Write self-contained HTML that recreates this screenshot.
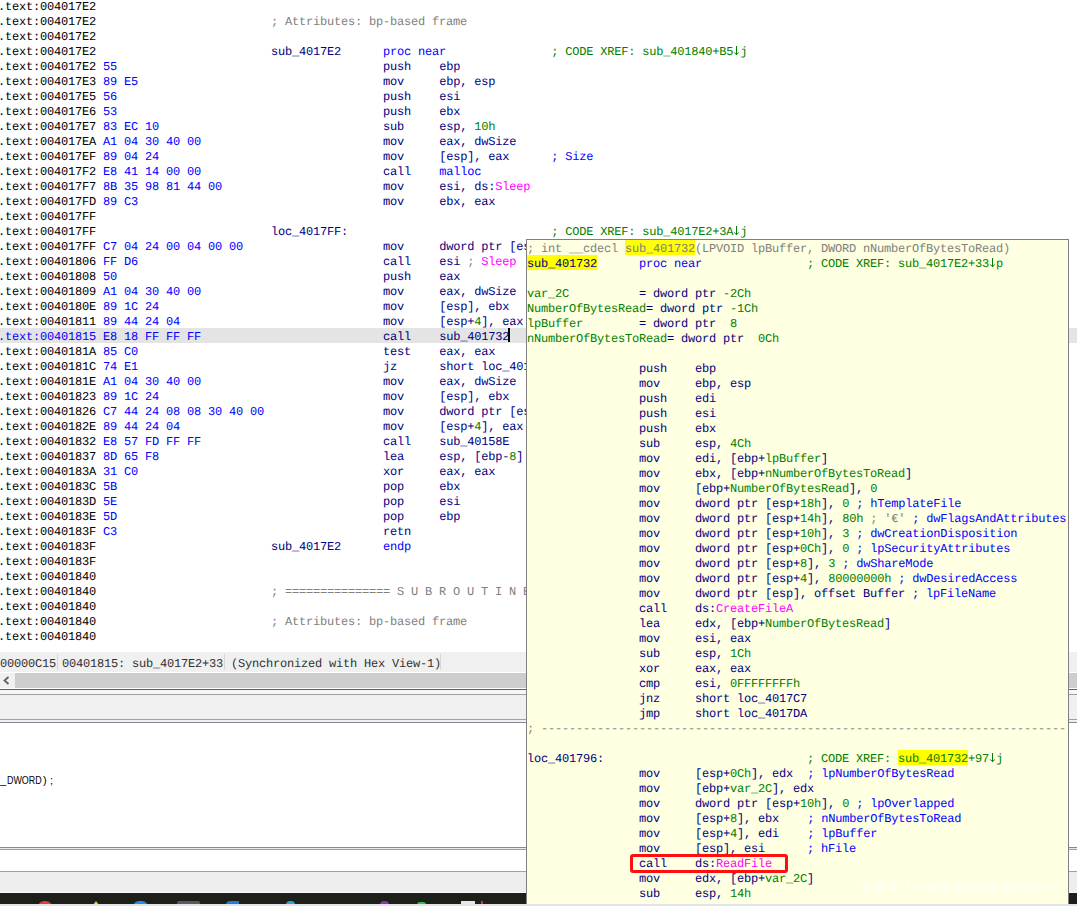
<!DOCTYPE html>
<html><head><meta charset="utf-8"><style>
html,body{margin:0;padding:0;}
body{width:1077px;height:906px;overflow:hidden;position:relative;background:#fff;font-family:"Liberation Mono",monospace;}
.abs{position:absolute;}
.ln{height:15px;white-space:pre;}
.code{font-size:12px;letter-spacing:-0.2px;line-height:15px;text-rendering:geometricPrecision;}
.code .ln{position:relative;top:2px;}
.a{color:#000}
.ab{color:#0000ff}
.b{color:#0000ff}
.i{color:#000080}
.d{color:#0000ff}
.n{color:#008000}
.g{color:#808080}
.c{color:#0000ff}
.x{color:#008000}
.m{color:#ff00ff}
.l{color:#000080}
.v{color:#008000}
.gh{color:#808080}
.lh{color:#000080}
.xh{color:#008000}
#main{left:-2px;top:-2px;}
#hlrow{left:0;top:328px;width:1077px;height:15px;background:#e4e4e4;}
#cursor{left:508px;top:328px;width:2px;height:14px;background:#000;}
#status{left:0;top:652px;width:1077px;height:20px;background:#f0f0f0;font-size:12px;letter-spacing:-0.2px;text-rendering:geometricPrecision;line-height:20px;color:#303030;}
#status span{position:absolute;top:2px;white-space:pre;}
.sep{position:absolute;top:2px;width:1px;height:16px;background:#d7d7d7;}
#popup{left:526px;top:239px;width:541px;height:665px;border:1px solid #808080;border-bottom:none;background:#ffffe1;overflow:hidden;}
#pcode{left:0;top:0;}
#redbox{left:630px;top:854px;width:152px;height:13px;border:3px solid #ff1010;border-radius:3px;}
.yh{position:absolute;height:15px;background:#ffff00;}
.arr{display:inline-block;vertical-align:top;width:7px;height:15px;}

</style></head><body>
<div id="hlrow" class="abs"></div>
<div id="main" class="abs code">
<div class="ln"><span class="a">.text:004017E2</span></div>
<div class="ln"><span class="a">.text:004017E2</span>                         <span class="g">; Attributes: bp-based frame</span></div>
<div class="ln"><span class="a">.text:004017E2</span></div>
<div class="ln"><span class="a">.text:004017E2</span>                         <span class="l">sub_4017E2</span>      <span class="d">proc near</span>               <span class="x">; CODE XREF: sub_401840+B5<svg class="arr" width="7" height="15"><path d="M3.5 1V9.8M1.3 7.4L3.5 9.8L5.7 7.4" fill="none" stroke="currentColor" stroke-width="1"/></svg>j</span></div>
<div class="ln"><span class="a">.text:004017E2</span> <span class="b">55</span>                                      <span class="i">push</span>    <span class="i">ebp</span></div>
<div class="ln"><span class="a">.text:004017E3</span> <span class="b">89 E5</span>                                   <span class="i">mov</span>     <span class="i">ebp, esp</span></div>
<div class="ln"><span class="a">.text:004017E5</span> <span class="b">56</span>                                      <span class="i">push</span>    <span class="i">esi</span></div>
<div class="ln"><span class="a">.text:004017E6</span> <span class="b">53</span>                                      <span class="i">push</span>    <span class="i">ebx</span></div>
<div class="ln"><span class="a">.text:004017E7</span> <span class="b">83 EC 10</span>                                <span class="i">sub</span>     <span class="i">esp, </span><span class="n">10h</span></div>
<div class="ln"><span class="a">.text:004017EA</span> <span class="b">A1 04 30 40 00</span>                          <span class="i">mov</span>     <span class="i">eax, dwSize</span></div>
<div class="ln"><span class="a">.text:004017EF</span> <span class="b">89 04 24</span>                                <span class="i">mov</span>     <span class="i">[esp], eax</span>      <span class="c">; Size</span></div>
<div class="ln"><span class="a">.text:004017F2</span> <span class="b">E8 41 14 00 00</span>                          <span class="i">call</span>    <span class="c">malloc</span></div>
<div class="ln"><span class="a">.text:004017F7</span> <span class="b">8B 35 98 81 44 00</span>                       <span class="i">mov</span>     <span class="i">esi, ds:</span><span class="m">Sleep</span></div>
<div class="ln"><span class="a">.text:004017FD</span> <span class="b">89 C3</span>                                   <span class="i">mov</span>     <span class="i">ebx, eax</span></div>
<div class="ln"><span class="a">.text:004017FF</span></div>
<div class="ln"><span class="a">.text:004017FF</span>                         <span class="l">loc_4017FF:</span>                             <span class="x">; CODE XREF: sub_4017E2+3A<svg class="arr" width="7" height="15"><path d="M3.5 1V9.8M1.3 7.4L3.5 9.8L5.7 7.4" fill="none" stroke="currentColor" stroke-width="1"/></svg>j</span></div>
<div class="ln"><span class="a">.text:004017FF</span> <span class="b">C7 04 24 00 04 00 00</span>                    <span class="i">mov</span>     <span class="i">dword ptr [esp], </span><span class="n">400h</span></div>
<div class="ln"><span class="a">.text:00401806</span> <span class="b">FF D6</span>                                   <span class="i">call</span>    <span class="i">esi </span><span class="g">; </span><span class="m">Sleep</span></div>
<div class="ln"><span class="a">.text:00401808</span> <span class="b">50</span>                                      <span class="i">push</span>    <span class="i">eax</span></div>
<div class="ln"><span class="a">.text:00401809</span> <span class="b">A1 04 30 40 00</span>                          <span class="i">mov</span>     <span class="i">eax, dwSize</span></div>
<div class="ln"><span class="a">.text:0040180E</span> <span class="b">89 1C 24</span>                                <span class="i">mov</span>     <span class="i">[esp], ebx</span></div>
<div class="ln"><span class="a">.text:00401811</span> <span class="b">89 44 24 04</span>                             <span class="i">mov</span>     <span class="i">[esp+</span><span class="n">4</span><span class="i">], eax</span></div>
<div class="ln"><span class="ab">.text:00401815</span> <span class="b">E8 18 FF FF FF</span>                          <span class="i">call</span>    <span class="i">sub_401732</span></div>
<div class="ln"><span class="a">.text:0040181A</span> <span class="b">85 C0</span>                                   <span class="i">test</span>    <span class="i">eax, eax</span></div>
<div class="ln"><span class="a">.text:0040181C</span> <span class="b">74 E1</span>                                   <span class="i">jz</span>      <span class="i">short loc_4017FF</span></div>
<div class="ln"><span class="a">.text:0040181E</span> <span class="b">A1 04 30 40 00</span>                          <span class="i">mov</span>     <span class="i">eax, dwSize</span></div>
<div class="ln"><span class="a">.text:00401823</span> <span class="b">89 1C 24</span>                                <span class="i">mov</span>     <span class="i">[esp], ebx</span></div>
<div class="ln"><span class="a">.text:00401826</span> <span class="b">C7 44 24 08 08 30 40 00</span>                 <span class="i">mov</span>     <span class="i">dword ptr [esp+</span><span class="n">8</span><span class="i">], offset aD</span></div>
<div class="ln"><span class="a">.text:0040182E</span> <span class="b">89 44 24 04</span>                             <span class="i">mov</span>     <span class="i">[esp+</span><span class="n">4</span><span class="i">], eax</span></div>
<div class="ln"><span class="a">.text:00401832</span> <span class="b">E8 57 FD FF FF</span>                          <span class="i">call</span>    <span class="i">sub_40158E</span></div>
<div class="ln"><span class="a">.text:00401837</span> <span class="b">8D 65 F8</span>                                <span class="i">lea</span>     <span class="i">esp, [ebp-</span><span class="n">8</span><span class="i">]</span></div>
<div class="ln"><span class="a">.text:0040183A</span> <span class="b">31 C0</span>                                   <span class="i">xor</span>     <span class="i">eax, eax</span></div>
<div class="ln"><span class="a">.text:0040183C</span> <span class="b">5B</span>                                      <span class="i">pop</span>     <span class="i">ebx</span></div>
<div class="ln"><span class="a">.text:0040183D</span> <span class="b">5E</span>                                      <span class="i">pop</span>     <span class="i">esi</span></div>
<div class="ln"><span class="a">.text:0040183E</span> <span class="b">5D</span>                                      <span class="i">pop</span>     <span class="i">ebp</span></div>
<div class="ln"><span class="a">.text:0040183F</span> <span class="b">C3</span>                                      <span class="i">retn</span></div>
<div class="ln"><span class="a">.text:0040183F</span>                         <span class="l">sub_4017E2</span>      <span class="d">endp</span></div>
<div class="ln"><span class="a">.text:0040183F</span></div>
<div class="ln"><span class="a">.text:00401840</span></div>
<div class="ln"><span class="a">.text:00401840</span>                         <span class="g">; =============== S U B R O U T I N E =======================================</span></div>
<div class="ln"><span class="a">.text:00401840</span></div>
<div class="ln"><span class="a">.text:00401840</span>                         <span class="g">; Attributes: bp-based frame</span></div>
<div class="ln"><span class="a">.text:00401840</span></div>
</div>
<div id="cursor" class="abs"></div>
<div id="status" class="abs"><span style="left:0">00000C15</span><div class="sep" style="left:57px"></div><span style="left:62px">00401815: sub_4017E2+33</span><div class="sep" style="left:224px"></div><span style="left:231px">(Synchronized with Hex View-1)</span><div class="sep" style="left:440px"></div></div>
<div class="abs" style="left:0;top:672px;width:1077px;height:1px;background:#fff"></div>
<div class="abs" style="left:0;top:673px;width:1077px;height:15px;background:#cdcdcd"></div>
<div class="abs" style="left:0;top:673px;width:15px;height:15px;background:#f0f0f0"></div>
<svg class="abs" style="left:0;top:673px" width="15" height="15"><path d="M8.5 4 L4.5 7.5 L8.5 11" fill="none" stroke="#606060" stroke-width="1.8"/></svg>
<div class="abs" style="left:0;top:689px;width:1077px;height:1px;background:#0078d7"></div>
<div class="abs" style="left:0;top:690px;width:1077px;height:4px;background:#f7f7f7"></div>
<div class="abs" style="left:0;top:694px;width:1077px;height:1px;background:#a0a0a0"></div>
<div class="abs" style="left:0;top:695px;width:1077px;height:24px;background:#f0f0f0"></div>
<div class="abs" style="left:0;top:719px;width:1077px;height:1px;background:#a0a0a0"></div>
<div class="abs" style="left:0;top:720px;width:1077px;height:2px;background:#f0f0f0"></div>
<div class="abs" style="left:0;top:722px;width:1077px;height:1px;background:#858a94"></div>
<div class="abs" style="left:0;top:773px;width:60px;height:16px;font-family:'Liberation Sans',sans-serif;font-size:11px;line-height:14px;color:#000;white-space:pre"><span class="abs" style="left:0;top:0">_</span><span class="abs" style="left:7px;top:0;transform:scaleX(0.81);transform-origin:0 0">DWORD</span><span class="abs" style="left:43px;top:0">)</span><span class="abs" style="left:50px;top:0">;</span></div>
<div class="abs" style="left:0;top:847px;width:1077px;height:1px;background:#858a94"></div>
<div class="abs" style="left:0;top:848px;width:1077px;height:1px;background:#e8e8e8"></div>
<div class="abs" style="left:0;top:849px;width:1077px;height:1px;background:#a0a0a0"></div>
<div class="abs" style="left:0;top:871px;width:1077px;height:1px;background:#a0a0a0"></div>
<div class="abs" style="left:0;top:872px;width:1077px;height:20px;background:#eeeeee"></div>
<div class="abs" style="left:0;top:892px;width:1077px;height:1px;background:#f8f8f8"></div>
<div class="abs" style="left:0;top:893px;width:1077px;height:11px;background:#1f1f19"></div>
<div class="abs" style="left:38px;top:901px;width:14px;height:6px;border-radius:7px 7px 0 0;background:#e04030"></div>
<div class="abs" style="left:93px;top:901px;width:0;height:0;border-left:3px solid transparent;border-right:3px solid transparent;border-bottom:4px solid #f0d020"></div>
<div class="abs" style="left:133px;top:901px;width:15px;height:6px;border-radius:8px 8px 0 0;background:#2a8ae8"></div>
<div class="abs" style="left:177px;top:901px;width:23px;height:4px;border-radius:2px 2px 0 0;background:#5a5a5a"></div>
<div class="abs" style="left:226px;top:901px;width:13px;height:4px;border-radius:10px 0 0 0;background:#1a7ee0"></div>
<div class="abs" style="left:286px;top:901px;width:9px;height:4px;border-radius:5px 5px 0 0;background:#30a0e8"></div>
<div class="abs" style="left:380px;top:901px;width:9px;height:4px;border-radius:5px 5px 0 0;background:#9030c0"></div>
<div class="abs" style="left:417px;top:902px;width:9px;height:3px;border-radius:5px 5px 0 0;background:#30c050"></div>
<div class="abs" style="left:461px;top:901px;width:14px;height:4px;background:#e8e8e8"></div>
<div class="abs" style="left:481px;top:901px;width:2px;height:3px;background:#c04040"></div>
<div id="popup" class="abs">
<div class="yh" style="left:98px;top:0;width:70px"></div><div class="yh" style="left:0;top:15px;width:70px"></div><div class="yh" style="left:371px;top:510px;width:70px"></div>
<div id="pcode" class="abs code">
<div class="ln"><span class="g">; int __cdecl </span><span class="gh">sub_401732</span><span class="g">(LPVOID lpBuffer, DWORD nNumberOfBytesToRead)</span></div>
<div class="ln"><span class="lh">sub_401732</span>      <span class="d">proc near</span>               <span class="x">; CODE XREF: sub_4017E2+33<svg class="arr" width="7" height="15"><path d="M3.5 1V9.8M1.3 7.4L3.5 9.8L5.7 7.4" fill="none" stroke="currentColor" stroke-width="1"/></svg>p</span></div>
<div class="ln"></div>
<div class="ln"><span class="v">var_2C</span>          <span class="i">= dword ptr </span><span class="n">-2Ch</span></div>
<div class="ln"><span class="v">NumberOfBytesRead</span><span class="i">= dword ptr </span><span class="n">-1Ch</span></div>
<div class="ln"><span class="v">lpBuffer</span>        <span class="i">= dword ptr  </span><span class="n">8</span></div>
<div class="ln"><span class="v">nNumberOfBytesToRead</span><span class="i">= dword ptr  </span><span class="n">0Ch</span></div>
<div class="ln"></div>
<div class="ln">                <span class="i">push</span>    <span class="i">ebp</span></div>
<div class="ln">                <span class="i">mov</span>     <span class="i">ebp, esp</span></div>
<div class="ln">                <span class="i">push</span>    <span class="i">edi</span></div>
<div class="ln">                <span class="i">push</span>    <span class="i">esi</span></div>
<div class="ln">                <span class="i">push</span>    <span class="i">ebx</span></div>
<div class="ln">                <span class="i">sub</span>     <span class="i">esp, </span><span class="n">4Ch</span></div>
<div class="ln">                <span class="i">mov</span>     <span class="i">edi, [ebp+</span><span class="v">lpBuffer</span><span class="i">]</span></div>
<div class="ln">                <span class="i">mov</span>     <span class="i">ebx, [ebp+</span><span class="v">nNumberOfBytesToRead</span><span class="i">]</span></div>
<div class="ln">                <span class="i">mov</span>     <span class="i">[ebp+</span><span class="v">NumberOfBytesRead</span><span class="i">], </span><span class="n">0</span></div>
<div class="ln">                <span class="i">mov</span>     <span class="i">dword ptr [esp+</span><span class="n">18h</span><span class="i">], </span><span class="n">0</span><span class="i"> </span><span class="c">; hTemplateFile</span></div>
<div class="ln">                <span class="i">mov</span>     <span class="i">dword ptr [esp+</span><span class="n">14h</span><span class="i">], </span><span class="n">80h</span><span class="i"> </span><span class="g">; &#x27;€&#x27;</span><span class="i"> </span><span class="c">; dwFlagsAndAttributes</span></div>
<div class="ln">                <span class="i">mov</span>     <span class="i">dword ptr [esp+</span><span class="n">10h</span><span class="i">], </span><span class="n">3</span><span class="i"> </span><span class="c">; dwCreationDisposition</span></div>
<div class="ln">                <span class="i">mov</span>     <span class="i">dword ptr [esp+</span><span class="n">0Ch</span><span class="i">], </span><span class="n">0</span><span class="i"> </span><span class="c">; lpSecurityAttributes</span></div>
<div class="ln">                <span class="i">mov</span>     <span class="i">dword ptr [esp+</span><span class="n">8</span><span class="i">], </span><span class="n">3</span><span class="i"> </span><span class="c">; dwShareMode</span></div>
<div class="ln">                <span class="i">mov</span>     <span class="i">dword ptr [esp+</span><span class="n">4</span><span class="i">], </span><span class="n">80000000h</span><span class="i"> </span><span class="c">; dwDesiredAccess</span></div>
<div class="ln">                <span class="i">mov</span>     <span class="i">dword ptr [esp], offset Buffer </span><span class="c">; lpFileName</span></div>
<div class="ln">                <span class="i">call</span>    <span class="i">ds:</span><span class="m">CreateFileA</span></div>
<div class="ln">                <span class="i">lea</span>     <span class="i">edx, [ebp+</span><span class="v">NumberOfBytesRead</span><span class="i">]</span></div>
<div class="ln">                <span class="i">mov</span>     <span class="i">esi, eax</span></div>
<div class="ln">                <span class="i">sub</span>     <span class="i">esp, </span><span class="n">1Ch</span></div>
<div class="ln">                <span class="i">xor</span>     <span class="i">eax, eax</span></div>
<div class="ln">                <span class="i">cmp</span>     <span class="i">esi, </span><span class="n">0FFFFFFFFh</span></div>
<div class="ln">                <span class="i">jnz</span>     <span class="i">short loc_4017C7</span></div>
<div class="ln">                <span class="i">jmp</span>     <span class="i">short loc_4017DA</span></div>
<div class="ln"><span class="g">; ---------------------------------------------------------------------------</span></div>
<div class="ln"></div>
<div class="ln"><span class="l">loc_401796:</span>                             <span class="x">; CODE XREF: </span><span class="xh">sub_401732</span><span class="x">+97<svg class="arr" width="7" height="15"><path d="M3.5 1V9.8M1.3 7.4L3.5 9.8L5.7 7.4" fill="none" stroke="currentColor" stroke-width="1"/></svg>j</span></div>
<div class="ln">                <span class="i">mov</span>     <span class="i">[esp+</span><span class="n">0Ch</span><span class="i">], edx</span>  <span class="c">; lpNumberOfBytesRead</span></div>
<div class="ln">                <span class="i">mov</span>     <span class="i">[ebp+</span><span class="v">var_2C</span><span class="i">], edx</span></div>
<div class="ln">                <span class="i">mov</span>     <span class="i">dword ptr [esp+</span><span class="n">10h</span><span class="i">], </span><span class="n">0</span><span class="i"> </span><span class="c">; lpOverlapped</span></div>
<div class="ln">                <span class="i">mov</span>     <span class="i">[esp+</span><span class="n">8</span><span class="i">], ebx</span>    <span class="c">; nNumberOfBytesToRead</span></div>
<div class="ln">                <span class="i">mov</span>     <span class="i">[esp+</span><span class="n">4</span><span class="i">], edi</span>    <span class="c">; lpBuffer</span></div>
<div class="ln">                <span class="i">mov</span>     <span class="i">[esp], esi</span>      <span class="c">; hFile</span></div>
<div class="ln">                <span class="i">call</span>    <span class="i">ds:</span><span class="m">ReadFile</span></div>
<div class="ln">                <span class="i">mov</span>     <span class="i">edx, [ebp+</span><span class="v">var_2C</span><span class="i">]</span></div>
<div class="ln">                <span class="i">sub</span>     <span class="i">esp, </span><span class="n">14h</span></div>
</div>
</div>
<div id="redbox" class="abs"></div>
<div class="abs" style="left:0;top:0;width:1077px;height:906px;font-family:'Liberation Sans',sans-serif;color:rgba(255,255,255,0.85);white-space:pre;pointer-events:none"><span class="abs" style="left:860px;top:877px;font-size:14px;line-height:18px">安全客</span><span class="abs" style="left:906px;top:876px;font-size:15px;line-height:18px">(</span><span class="abs" style="left:916px;top:877px;font-size:15px;letter-spacing:0.25px;line-height:18px">www.anquanke.com</span><span class="abs" style="left:1056px;top:876px;font-size:15px;line-height:18px">)</span></div>
<div class="abs" style="left:0;top:904px;width:1077px;height:2px;background:#e2e5eb"></div>

</body></html>
